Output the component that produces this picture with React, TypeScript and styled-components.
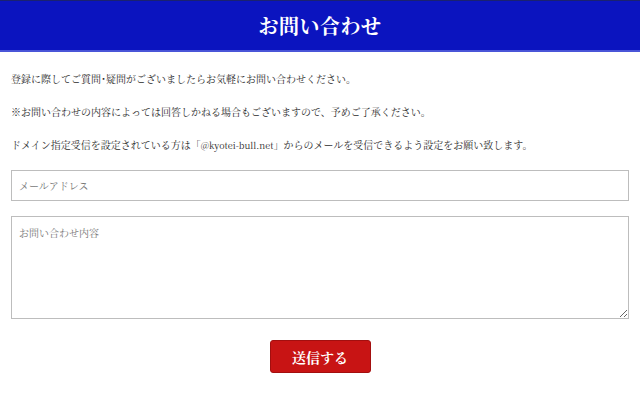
import React from "react";
import styled, { createGlobalStyle } from "styled-components";

const GlobalStyle = createGlobalStyle`
  html, body {
    margin: 0;
    padding: 0;
    background: #fff;
  }
  body {
    font-family: "Noto Serif CJK JP", "Liberation Serif", "Noto Sans CJK JP", serif;
    color: #333;
  }
`;

const Header = styled.header`
  height: 49px;
  background-color: #0b14bf;
  border-top: 1px solid #1a2270;
  border-bottom: 2px solid #4a55d8;
  display: flex;
  align-items: center;
  justify-content: center;
`;

const Title = styled.h1`
  margin: 0;
  color: #fff;
  font-size: 20px;
  font-weight: bold;
  letter-spacing: 0.5px;
`;

const Content = styled.main`
  padding: 19px 11px 0 11px;
  display: flex;
  flex-direction: column;
  gap: 16px;
`;

const Notes = styled.div`
  display: flex;
  flex-direction: column;
  gap: 17px;
`;

const Note = styled.p`
  margin: 0;
  font-size: 10px;
  line-height: 16px;
  color: #2b2b2b;
`;

const Latin = styled.span`
  font-size: 9px;
`;

const Form = styled.form`
  display: flex;
  flex-direction: column;
  gap: 15px;
  margin: 0;
`;

const fieldBase = `
  box-sizing: border-box;
  width: 100%;
  border: 1px solid #bdbdbd;
  background: #fff;
  font-family: "Noto Serif CJK JP", "Liberation Serif", "Noto Sans CJK JP", serif;
  font-size: 10px;
  color: #333;
  padding: 0 7px;
  outline: none;
  &::placeholder {
    color: #777;
  }
`;

const TextInput = styled.input`
  ${fieldBase}
  height: 31px;
`;

const TextArea = styled.textarea`
  ${fieldBase}
  height: 103px;
  padding-top: 8px;
  resize: vertical;
  display: block;
`;

const Actions = styled.div`
  display: flex;
  justify-content: center;
  margin-top: 6px;
`;

const SubmitButton = styled.button`
  width: 101px;
  height: 33px;
  background-color: #c81414;
  border: 1px solid #a30f0f;
  border-radius: 3px;
  color: #fff;
  font-family: "Noto Serif CJK JP", "Liberation Serif", "Noto Sans CJK JP", serif;
  font-size: 14px;
  font-weight: bold;
  cursor: pointer;
`;

export default function App() {
  return (
    <>
      <GlobalStyle />
      <Header>
        <Title>お問い合わせ</Title>
      </Header>
      <Content>
        <Notes>
          <Note>登録に際してご質問･疑問がございましたらお気軽にお問い合わせください。</Note>
          <Note>※お問い合わせの内容によっては回答しかねる場合もございますので、予めご了承ください。</Note>
          <Note>
            ドメイン指定受信を設定されている方は「<Latin>@kyotei-bull.net</Latin>」からのメールを受信できるよう設定をお願い致します。
          </Note>
        </Notes>
        <Form onSubmit={(e) => e.preventDefault()}>
          <TextInput type="email" placeholder="メールアドレス" />
          <TextArea placeholder="お問い合わせ内容" />
          <Actions>
            <SubmitButton type="submit">送信する</SubmitButton>
          </Actions>
        </Form>
      </Content>
    </>
  );
}
